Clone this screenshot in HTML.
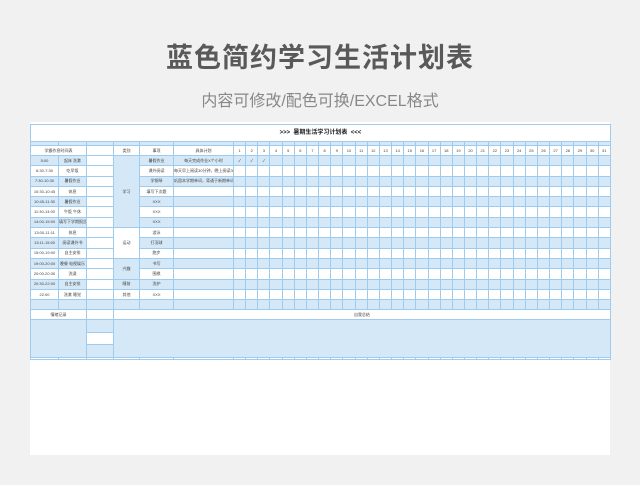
<!DOCTYPE html>
<html><head><meta charset="utf-8"><style>
html,body{margin:0;padding:0;}
body{width:640px;height:485px;background:#f1f1f1;position:relative;overflow:hidden;font-family:"Liberation Sans","Noto Sans CJK SC",sans-serif;}
.t1{position:absolute;top:36px;left:0;width:640px;text-align:center;font-size:27px;font-weight:bold;color:#595959;letter-spacing:1px;}
.t2{position:absolute;top:87px;left:0;width:640px;text-align:center;font-size:16px;color:#888;}
.card{position:absolute;left:30px;top:122px;width:580px;height:333px;background:#fff;}
table{position:absolute;left:30px;top:124px;border-collapse:collapse;table-layout:fixed;width:580px;}
td{border:1px solid #9fcbef;padding:0;font-size:4px;color:#444;text-align:center;overflow:hidden;white-space:nowrap;line-height:4px;}
.b td{background:#d5e8f7;}
td.w{background:#fff !important;}
td.bl{background:#d5e8f7 !important;}
</style></head><body>
<div class="t1">蓝色简约学习生活计划表</div>
<div class="t2">内容可修改/配色可换/EXCEL格式</div>
<div class="card"></div>
<table>
<colgroup><col style="width:28px"><col style="width:28px"><col style="width:27px"><col style="width:26px"><col style="width:34px"><col style="width:60px">
<col span="31" style="width:12.16px"></colgroup>
<tr style="height:17px"><td colspan="37" class="w" style="font-size:6px;font-weight:bold;color:#222">&gt;&gt;&gt;&nbsp;&nbsp;暑期生活学习计划表&nbsp;&nbsp;&lt;&lt;&lt;</td></tr>
<tr class="b" style="height:4px"><td></td><td></td><td></td><td></td><td></td><td></td><td></td><td></td><td></td><td></td><td></td><td></td><td></td><td></td><td></td><td></td><td></td><td></td><td></td><td></td><td></td><td></td><td></td><td></td><td></td><td></td><td></td><td></td><td></td><td></td><td></td><td></td><td></td><td></td><td></td><td></td><td></td></tr>
<tr style="height:10px"><td colspan="2">学霸作息时间表</td><td></td><td>类别</td><td>事项</td><td>具体计划</td><td>1</td><td>2</td><td>3</td><td>4</td><td>5</td><td>6</td><td>7</td><td>8</td><td>9</td><td>10</td><td>11</td><td>12</td><td>13</td><td>14</td><td>15</td><td>16</td><td>17</td><td>18</td><td>19</td><td>20</td><td>21</td><td>22</td><td>23</td><td>24</td><td>25</td><td>26</td><td>27</td><td>28</td><td>29</td><td>30</td><td>31</td></tr>
<tr class="b" style="height:10.3px"><td>5:00</td><td>起床 洗漱</td><td class="w"></td><td rowspan="7" class="bl">学习</td><td>暑假作业</td><td>每天完成作业X个小时</td><td>✓</td><td>✓</td><td>✓</td><td></td><td></td><td></td><td></td><td></td><td></td><td></td><td></td><td></td><td></td><td></td><td></td><td></td><td></td><td></td><td></td><td></td><td></td><td></td><td></td><td></td><td></td><td></td><td></td><td></td><td></td><td></td><td></td></tr>
<tr style="height:10.3px"><td>6:30-7:30</td><td>吃早饭</td><td></td><td>课外阅读</td><td>每天早上阅读30分钟，晚上阅读30分钟</td><td></td><td></td><td></td><td></td><td></td><td></td><td></td><td></td><td></td><td></td><td></td><td></td><td></td><td></td><td></td><td></td><td></td><td></td><td></td><td></td><td></td><td></td><td></td><td></td><td></td><td></td><td></td><td></td><td></td><td></td><td></td></tr>
<tr class="b" style="height:10.3px"><td>7:30-10:30</td><td>暑假作业</td><td class="w"></td><td>学钢琴</td><td>巩固本学期单词，背诵于新期单词</td><td></td><td></td><td></td><td></td><td></td><td></td><td></td><td></td><td></td><td></td><td></td><td></td><td></td><td></td><td></td><td></td><td></td><td></td><td></td><td></td><td></td><td></td><td></td><td></td><td></td><td></td><td></td><td></td><td></td><td></td><td></td></tr>
<tr style="height:10.3px"><td>10:30-10:45</td><td>休息</td><td></td><td>填写下次题</td><td></td><td></td><td></td><td></td><td></td><td></td><td></td><td></td><td></td><td></td><td></td><td></td><td></td><td></td><td></td><td></td><td></td><td></td><td></td><td></td><td></td><td></td><td></td><td></td><td></td><td></td><td></td><td></td><td></td><td></td><td></td><td></td></tr>
<tr class="b" style="height:10.3px"><td>10:45-11:30</td><td>暑假作业</td><td class="w"></td><td>XXX</td><td></td><td></td><td></td><td></td><td></td><td></td><td></td><td></td><td></td><td></td><td></td><td></td><td></td><td></td><td></td><td></td><td></td><td></td><td></td><td></td><td></td><td></td><td></td><td></td><td></td><td></td><td></td><td></td><td></td><td></td><td></td><td></td></tr>
<tr style="height:10.3px"><td>11:30-14:00</td><td>午饭 午休</td><td></td><td>XXX</td><td></td><td></td><td></td><td></td><td></td><td></td><td></td><td></td><td></td><td></td><td></td><td></td><td></td><td></td><td></td><td></td><td></td><td></td><td></td><td></td><td></td><td></td><td></td><td></td><td></td><td></td><td></td><td></td><td></td><td></td><td></td><td></td></tr>
<tr class="b" style="height:10.3px"><td>14:00-15:00</td><td>填写下学期报告</td><td class="w"></td><td>XXX</td><td></td><td></td><td></td><td></td><td></td><td></td><td></td><td></td><td></td><td></td><td></td><td></td><td></td><td></td><td></td><td></td><td></td><td></td><td></td><td></td><td></td><td></td><td></td><td></td><td></td><td></td><td></td><td></td><td></td><td></td><td></td><td></td></tr>
<tr style="height:10.3px"><td>13:00-11:11</td><td>休息</td><td></td><td rowspan="3" class="w">运动</td><td>游泳</td><td></td><td></td><td></td><td></td><td></td><td></td><td></td><td></td><td></td><td></td><td></td><td></td><td></td><td></td><td></td><td></td><td></td><td></td><td></td><td></td><td></td><td></td><td></td><td></td><td></td><td></td><td></td><td></td><td></td><td></td><td></td><td></td></tr>
<tr class="b" style="height:10.3px"><td>13:11-15:00</td><td>阅读课外书</td><td class="w"></td><td>打羽球</td><td></td><td></td><td></td><td></td><td></td><td></td><td></td><td></td><td></td><td></td><td></td><td></td><td></td><td></td><td></td><td></td><td></td><td></td><td></td><td></td><td></td><td></td><td></td><td></td><td></td><td></td><td></td><td></td><td></td><td></td><td></td><td></td></tr>
<tr style="height:10.3px"><td>15:00-19:00</td><td>自主安排</td><td></td><td>跑步</td><td></td><td></td><td></td><td></td><td></td><td></td><td></td><td></td><td></td><td></td><td></td><td></td><td></td><td></td><td></td><td></td><td></td><td></td><td></td><td></td><td></td><td></td><td></td><td></td><td></td><td></td><td></td><td></td><td></td><td></td><td></td><td></td></tr>
<tr class="b" style="height:10.3px"><td>19:00-20:00</td><td>晚餐 电视娱乐</td><td class="w"></td><td rowspan="2" class="bl">兴趣</td><td>书写</td><td></td><td></td><td></td><td></td><td></td><td></td><td></td><td></td><td></td><td></td><td></td><td></td><td></td><td></td><td></td><td></td><td></td><td></td><td></td><td></td><td></td><td></td><td></td><td></td><td></td><td></td><td></td><td></td><td></td><td></td><td></td><td></td></tr>
<tr style="height:10.3px"><td>20:00-20:30</td><td>洗澡</td><td></td><td>围棋</td><td></td><td></td><td></td><td></td><td></td><td></td><td></td><td></td><td></td><td></td><td></td><td></td><td></td><td></td><td></td><td></td><td></td><td></td><td></td><td></td><td></td><td></td><td></td><td></td><td></td><td></td><td></td><td></td><td></td><td></td><td></td><td></td></tr>
<tr class="b" style="height:10.3px"><td>20:30-22:00</td><td>自主安排</td><td class="w"></td><td>睡前</td><td>洗护</td><td></td><td></td><td></td><td></td><td></td><td></td><td></td><td></td><td></td><td></td><td></td><td></td><td></td><td></td><td></td><td></td><td></td><td></td><td></td><td></td><td></td><td></td><td></td><td></td><td></td><td></td><td></td><td></td><td></td><td></td><td></td><td></td></tr>
<tr style="height:10.3px"><td>22:00</td><td>洗漱 睡觉</td><td></td><td>其他</td><td>XXX</td><td></td><td></td><td></td><td></td><td></td><td></td><td></td><td></td><td></td><td></td><td></td><td></td><td></td><td></td><td></td><td></td><td></td><td></td><td></td><td></td><td></td><td></td><td></td><td></td><td></td><td></td><td></td><td></td><td></td><td></td><td></td><td></td></tr>
<tr class="b" style="height:10px"><td></td><td></td><td></td><td></td><td></td><td></td><td></td><td></td><td></td><td></td><td></td><td></td><td></td><td></td><td></td><td></td><td></td><td></td><td></td><td></td><td></td><td></td><td></td><td></td><td></td><td></td><td></td><td></td><td></td><td></td><td></td><td></td><td></td><td></td><td></td><td></td><td></td></tr>
<tr style="height:10px"><td colspan="2">情绪记录</td><td></td><td colspan="34">自我总结</td></tr>
<tr class="b" style="height:13px"><td colspan="2" rowspan="3"></td><td></td><td colspan="34" rowspan="3"></td></tr>
<tr style="height:12px"><td></td></tr>
<tr class="b" style="height:13px"><td></td></tr>
<tr style="height:2px"><td></td><td></td><td></td><td></td><td></td><td></td><td></td><td></td><td></td><td></td><td></td><td></td><td></td><td></td><td></td><td></td><td></td><td></td><td></td><td></td><td></td><td></td><td></td><td></td><td></td><td></td><td></td><td></td><td></td><td></td><td></td><td></td><td></td><td></td><td></td><td></td><td></td></tr>
</table>
</body></html>
